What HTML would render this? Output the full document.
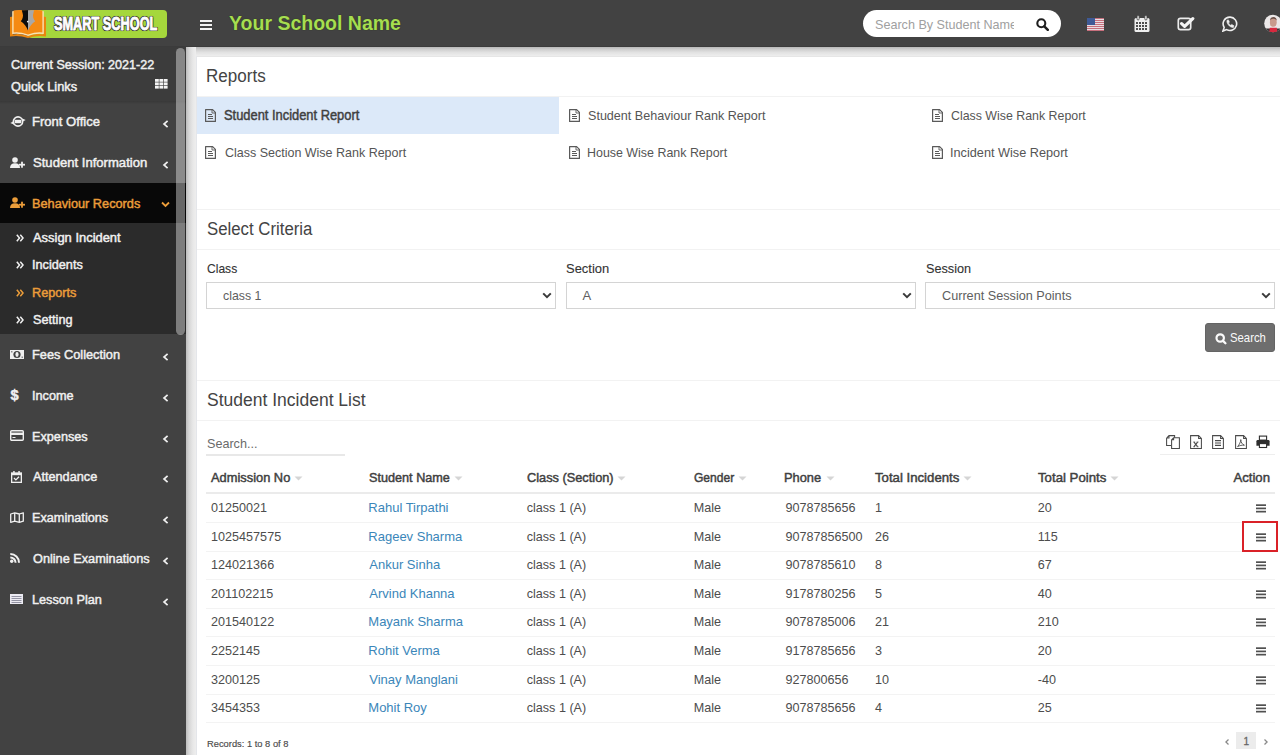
<!DOCTYPE html>
<html><head><meta charset="utf-8">
<style>
*{box-sizing:border-box;margin:0;padding:0}
html,body{width:1280px;height:755px;overflow:hidden;background:#efefef;font-family:"Liberation Sans",sans-serif;position:relative}
.a{position:absolute;display:block}
.t{position:absolute;white-space:nowrap;line-height:1}
</style></head><body>
<div class="a" style="left:0px;top:0px;width:1280px;height:755px;background:#efefef;"></div>
<div class="a" style="left:186px;top:47px;width:1094px;height:10px;background:linear-gradient(180deg,#b8b8b8 0%,#cfcfcf 25%,#e2e2e2 55%,#eeeeee 90%);"></div>
<div class="a" style="left:186px;top:47px;width:10px;height:708px;background:linear-gradient(90deg,#bdbdbd 0%,#d6d6d6 30%,#e8e8e8 70%,#eeeeee 100%);"></div>
<div class="a" style="left:196px;top:56px;width:1084px;height:1px;background:#e6e6e6;"></div>
<div class="a" style="left:196px;top:56px;width:1px;height:699px;background:#e4e6ea;"></div>
<div class="a" style="left:197px;top:57px;width:1083px;height:698px;background:#fff;"></div>
<div class="a" style="left:0px;top:0px;width:1280px;height:47px;background:#424242;"></div>
<div class="a" style="left:0px;top:46px;width:1280px;height:1px;background:#3b3b3b;"></div>
<div class="a" style="left:28px;top:10px;width:139px;height:28px;background:#a5d73c;border-radius:4px"></div>
<div class="t" style="left:53.50px;top:16.40px;font-size:17.6px;color:#fff;font-weight:bold;transform:scaleX(0.7240);transform-origin:0 0;-webkit-text-stroke:0.9px #fff;text-shadow:1px 0 0 #333,-1px 0 0 #333,0 1px 0 #333,0 -1px 0 #333,1px 1px 0 #333,-1px -1px 0 #333,1px -1px 0 #333,-1px 1px 0 #333,0 0 2px #222;">SMART SCHOOL</div>
<svg class="a" style="left:9px;top:9px;" width="40" height="30" viewBox="0 0 40 30"><path d="M1 8 L4 7.5 L4 25.5 Q11 24 19 27 Q27 24 34 25.5 L34 7.5 L37 8 L37 27.5 Q28 26 19 29 Q10 26 1 27.5 Z" fill="#e9850f"/><path d="M3.2 2.2 Q10 0.6 19 2.2 L19.3 27 Q11 23.8 3.2 25 Z" fill="#fbe2b4"/><path d="M34.8 2.2 Q28 0.6 19 2.2 L18.7 27 Q27 23.8 34.8 25 Z" fill="#fbe2b4"/><path d="M4.6 1.6 Q11 0.4 19 2 L19 25.6 Q11 22.6 4.6 23.4 Z" fill="#f58a12"/><path d="M33.4 1.6 Q27 0.4 19 2 L19 25.6 Q27 22.6 33.4 23.4 Z" fill="#f58a12"/><path d="M12.8 1.2 L19 1.2 L19 21.5 C17.5 17.5 15 14.5 11.8 12.3 C13.8 10 14.6 6.5 13.6 4.2 Z" fill="#0d0d0d"/><path d="M19 1.2 L25 1.2 L24.4 4.2 C23.4 6.5 24.2 10 26.2 12.3 C23 14.5 20.5 17.5 19 21.5 Z" fill="#a8a8a8"/><circle cx="18.8" cy="12.6" r="0.9" fill="#eee"/></svg>
<div class="a" style="left:200px;top:20px;width:12px;height:2px;background:#f2f2f2;"></div>
<div class="a" style="left:200px;top:24px;width:12px;height:2px;background:#f2f2f2;"></div>
<div class="a" style="left:200px;top:28px;width:12px;height:2px;background:#f2f2f2;"></div>
<div class="t" style="left:229.00px;top:13.79px;font-size:19.5px;color:#a6dd52;font-weight:bold;text-shadow:0 0 1px #1f3300;">Your School Name</div>
<div class="a" style="left:863px;top:10px;width:198px;height:27px;background:#fff;border-radius:13.5px"></div>
<div class="a" style="left:870px;top:10px;width:144px;height:27px;overflow:hidden">
<div class="t" style="left:5.00px;top:8.63px;font-size:12.6px;color:#a0a0a0;font-weight:normal;">Search By Student Name</div>
</div>
<svg class="a" style="left:1036px;top:18px;" width="13" height="13" viewBox="0 0 13 13"><circle cx="5.3" cy="5.3" r="4" stroke="#1f1f1f" stroke-width="2.1" fill="none"/><path d="M8.3 8.3 L11.8 11.8" stroke="#1f1f1f" stroke-width="2.5" stroke-linecap="round"/></svg>
<svg class="a" style="left:1087px;top:18px;" width="17" height="13" viewBox="0 0 17 13"><rect x="0" y="0.00" width="17" height="1" fill="#c66f7c"/><rect x="0" y="1.00" width="17" height="1" fill="#e9dde2"/><rect x="0" y="2.00" width="17" height="1" fill="#c66f7c"/><rect x="0" y="3.00" width="17" height="1" fill="#e9dde2"/><rect x="0" y="4.00" width="17" height="1" fill="#c66f7c"/><rect x="0" y="5.00" width="17" height="1" fill="#e9dde2"/><rect x="0" y="6.00" width="17" height="1" fill="#c66f7c"/><rect x="0" y="7.00" width="17" height="1" fill="#e9dde2"/><rect x="0" y="8.00" width="17" height="1" fill="#c66f7c"/><rect x="0" y="9.00" width="17" height="1" fill="#e9dde2"/><rect x="0" y="10.00" width="17" height="1" fill="#c66f7c"/><rect x="0" y="11.00" width="17" height="1" fill="#e9dde2"/><rect x="0" y="12.00" width="17" height="1" fill="#c66f7c"/><rect x="0" y="13.00" width="17" height="1" fill="#e9dde2"/><rect x="0" y="0" width="8" height="7" fill="#3f5a96"/></svg>
<svg class="a" style="left:1134px;top:15px;" width="16" height="17" viewBox="0 0 16 17"><rect x="0.5" y="3" width="15" height="14" rx="1.5" fill="#efefef"/><rect x="3" y="0.5" width="2.2" height="4.5" rx="1.1" fill="#efefef" stroke="#424242" stroke-width="0.8"/><rect x="10.8" y="0.5" width="2.2" height="4.5" rx="1.1" fill="#efefef" stroke="#424242" stroke-width="0.8"/><rect x="2.0" y="7.0" width="2" height="2" fill="#4e4e4e"/><rect x="5.0" y="7.0" width="2" height="2" fill="#4e4e4e"/><rect x="8.0" y="7.0" width="2" height="2" fill="#4e4e4e"/><rect x="11.0" y="7.0" width="2" height="2" fill="#4e4e4e"/><rect x="2.0" y="10.0" width="2" height="2" fill="#4e4e4e"/><rect x="5.0" y="10.0" width="2" height="2" fill="#4e4e4e"/><rect x="8.0" y="10.0" width="2" height="2" fill="#4e4e4e"/><rect x="11.0" y="10.0" width="2" height="2" fill="#4e4e4e"/><rect x="2.0" y="13.0" width="2" height="2" fill="#4e4e4e"/><rect x="5.0" y="13.0" width="2" height="2" fill="#4e4e4e"/><rect x="8.0" y="13.0" width="2" height="2" fill="#4e4e4e"/><rect x="11.0" y="13.0" width="2" height="2" fill="#4e4e4e"/></svg>
<svg class="a" style="left:1177px;top:16px;" width="18" height="15" viewBox="0 0 18 15"><rect x="1.3" y="2.3" width="12.4" height="11.4" rx="2.2" stroke="#ececec" stroke-width="1.7" fill="none"/><path d="M4.6 7.6 L7.6 10.4 L15.8 2.6" stroke="#f4f4f4" stroke-width="3.2" stroke-linecap="round" stroke-linejoin="round" fill="none"/></svg>
<svg class="a" style="left:1222px;top:16px;" width="16" height="16" viewBox="0 0 16 16"><path d="M8.2 1.1 A6.7 6.7 0 1 1 4.6 13.6 L0.9 15.1 L2.2 11.4 A6.7 6.7 0 0 1 8.2 1.1 Z" stroke="#efefef" stroke-width="1.6" fill="none"/><path d="M5 4.3 C4.2 7 7.4 11.6 11.4 11.5 L12 9.8 L9.7 8.4 L8.8 9.3 C7.8 8.9 6.9 8 6.5 7 L7.4 6.1 L6.4 3.9 Z" fill="#efefef" stroke="#efefef" stroke-width="0.6" stroke-linejoin="round"/></svg>
<svg class="a" style="left:1264px;top:14px;" width="16" height="19" viewBox="0 0 16 19"><defs><clipPath id="avc"><circle cx="9" cy="9.5" r="8.8"/></clipPath></defs><g clip-path="url(#avc)"><rect x="0" y="0" width="18" height="19" fill="#ece8e8"/><rect x="0" y="14.5" width="18" height="5" fill="#3a3434"/><ellipse cx="9.3" cy="8.2" rx="3.4" ry="4.6" fill="#c99a8c"/><path d="M5.9 6.5 Q6 3 9.3 3 Q12.6 3 12.7 6.5 Q11.5 4.6 9.3 4.8 Q7 4.6 5.9 6.5 Z" fill="#6a5048"/><path d="M5.2 19 L5.8 13.8 L12.8 13.8 L13.4 19 Z" fill="#d8283e"/></g></svg>
<div class="a" style="left:0px;top:47px;width:186px;height:708px;background:#424242;"></div>
<div class="a" style="left:0px;top:47px;width:186px;height:54px;background:#3c3c3c;"></div>
<div class="a" style="left:0px;top:101px;width:186px;height:3px;background:linear-gradient(180deg,#383838,#424242);"></div>
<div class="t" style="left:10.50px;top:58.72px;font-size:12.5px;color:#f0f0f0;font-weight:normal;transform:scaleX(1.0057);transform-origin:0 0;-webkit-text-stroke:0.45px currentColor;">Current Session: 2021-22</div>
<div class="t" style="left:10.50px;top:81.22px;font-size:12.5px;color:#f0f0f0;font-weight:normal;transform:scaleX(1.0224);transform-origin:0 0;-webkit-text-stroke:0.45px currentColor;">Quick Links</div>
<svg class="a" style="left:155px;top:79px;" width="13" height="10" viewBox="0 0 13 10"><rect x="0.0" y="0.0" width="3.8" height="2.8" fill="#f4f4f4"/><rect x="4.4" y="0.0" width="3.8" height="2.8" fill="#f4f4f4"/><rect x="8.8" y="0.0" width="3.8" height="2.8" fill="#f4f4f4"/><rect x="0.0" y="3.4" width="3.8" height="2.8" fill="#f4f4f4"/><rect x="4.4" y="3.4" width="3.8" height="2.8" fill="#f4f4f4"/><rect x="8.8" y="3.4" width="3.8" height="2.8" fill="#f4f4f4"/><rect x="0.0" y="6.8" width="3.8" height="2.8" fill="#f4f4f4"/><rect x="4.4" y="6.8" width="3.8" height="2.8" fill="#f4f4f4"/><rect x="8.8" y="6.8" width="3.8" height="2.8" fill="#f4f4f4"/></svg>
<div class="t" style="left:31.96px;top:115.72px;font-size:12.5px;color:#f0f0f0;font-weight:normal;transform:scaleX(1.0450);transform-origin:0 0;-webkit-text-stroke:0.45px currentColor;">Front Office</div>
<svg class="a" style="left:162px;top:120px;" width="7" height="8" viewBox="0 0 7 8"><path d="M5.6 0.8 L2 4 L5.6 7.2" stroke="#f0f0f0" stroke-width="1.7" fill="none"/></svg>
<div class="t" style="left:33.00px;top:156.72px;font-size:12.5px;color:#f0f0f0;font-weight:normal;transform:scaleX(1.0473);transform-origin:0 0;-webkit-text-stroke:0.45px currentColor;">Student Information</div>
<svg class="a" style="left:162px;top:161px;" width="7" height="8" viewBox="0 0 7 8"><path d="M5.6 0.8 L2 4 L5.6 7.2" stroke="#f0f0f0" stroke-width="1.7" fill="none"/></svg>
<svg class="a" style="left:10px;top:116px;" width="16" height="11" viewBox="0 0 16 11"><circle cx="8" cy="5.5" r="4.6" stroke="#f0f0f0" stroke-width="1.7" fill="none"/><rect x="4.8" y="3.8" width="6.4" height="3.4" fill="#f0f0f0"/><path d="M0.3 7 L3.8 5.2 L3.8 8.6 Z M15.7 4 L12.2 5.8 L12.2 2.4 Z" fill="#f0f0f0"/></svg>
<svg class="a" style="left:10px;top:157px;" width="15" height="11" viewBox="0 0 15 11"><circle cx="5" cy="3" r="2.8" fill="#f0f0f0"/><path d="M0 11 Q0 6.2 5 6.2 Q10 6.2 10 11 Z" fill="#f0f0f0"/><rect x="9" y="6.8" width="6" height="1.8" fill="#f0f0f0"/><rect x="11.1" y="4.7" width="1.8" height="6" fill="#f0f0f0"/></svg>
<div class="a" style="left:0px;top:183px;width:186px;height:40px;background:#080808;"></div>
<svg class="a" style="left:10px;top:197px;" width="15" height="11" viewBox="0 0 15 11"><circle cx="5" cy="3" r="2.8" fill="#eb9d3a"/><path d="M0 11 Q0 6.2 5 6.2 Q10 6.2 10 11 Z" fill="#eb9d3a"/><rect x="9" y="6.8" width="6" height="1.8" fill="#eb9d3a"/><rect x="11.1" y="4.7" width="1.8" height="6" fill="#eb9d3a"/></svg>
<div class="t" style="left:31.98px;top:197.72px;font-size:12.5px;color:#eb9d3a;font-weight:normal;transform:scaleX(1.0185);transform-origin:0 0;-webkit-text-stroke:0.45px currentColor;">Behaviour Records</div>
<svg class="a" style="left:161px;top:201px;" width="9" height="7" viewBox="0 0 9 7"><path d="M1 1.5 L4.5 5 L8 1.5" stroke="#eb9d3a" stroke-width="1.8" fill="none"/></svg>
<div class="a" style="left:0px;top:223px;width:186px;height:111px;background:#2b2b2b;"></div>
<div class="t" style="left:33.00px;top:231.72px;font-size:12.5px;color:#f0f0f0;font-weight:normal;transform:scaleX(1.0340);transform-origin:0 0;-webkit-text-stroke:0.45px currentColor;">Assign Incident</div>
<svg class="a" style="left:16px;top:234px;" width="8" height="8" viewBox="0 0 8 8"><path d="M0.8 0.8 L3.5 4 L0.8 7.2 M4.3 0.8 L7 4 L4.3 7.2" stroke="#f0f0f0" stroke-width="1.5" fill="none"/></svg>
<div class="t" style="left:31.98px;top:258.72px;font-size:12.5px;color:#f0f0f0;font-weight:normal;transform:scaleX(1.0150);transform-origin:0 0;-webkit-text-stroke:0.45px currentColor;">Incidents</div>
<svg class="a" style="left:16px;top:261px;" width="8" height="8" viewBox="0 0 8 8"><path d="M0.8 0.8 L3.5 4 L0.8 7.2 M4.3 0.8 L7 4 L4.3 7.2" stroke="#f0f0f0" stroke-width="1.5" fill="none"/></svg>
<div class="t" style="left:31.98px;top:286.72px;font-size:12.5px;color:#eb9d3a;font-weight:normal;transform:scaleX(1.0150);transform-origin:0 0;-webkit-text-stroke:0.45px currentColor;">Reports</div>
<svg class="a" style="left:16px;top:289px;" width="8" height="8" viewBox="0 0 8 8"><path d="M0.8 0.8 L3.5 4 L0.8 7.2 M4.3 0.8 L7 4 L4.3 7.2" stroke="#eb9d3a" stroke-width="1.5" fill="none"/></svg>
<div class="t" style="left:33.00px;top:313.72px;font-size:12.5px;color:#f0f0f0;font-weight:normal;transform:scaleX(1.0150);transform-origin:0 0;-webkit-text-stroke:0.45px currentColor;">Setting</div>
<svg class="a" style="left:16px;top:316px;" width="8" height="8" viewBox="0 0 8 8"><path d="M0.8 0.8 L3.5 4 L0.8 7.2 M4.3 0.8 L7 4 L4.3 7.2" stroke="#f0f0f0" stroke-width="1.5" fill="none"/></svg>
<div class="t" style="left:31.98px;top:348.72px;font-size:12.5px;color:#f0f0f0;font-weight:normal;transform:scaleX(1.0223);transform-origin:0 0;-webkit-text-stroke:0.45px currentColor;">Fees Collection</div>
<svg class="a" style="left:162px;top:353px;" width="7" height="8" viewBox="0 0 7 8"><path d="M5.6 0.8 L2 4 L5.6 7.2" stroke="#f0f0f0" stroke-width="1.7" fill="none"/></svg>
<div class="t" style="left:31.98px;top:389.72px;font-size:12.5px;color:#f0f0f0;font-weight:normal;transform:scaleX(1.0150);transform-origin:0 0;-webkit-text-stroke:0.45px currentColor;">Income</div>
<svg class="a" style="left:162px;top:394px;" width="7" height="8" viewBox="0 0 7 8"><path d="M5.6 0.8 L2 4 L5.6 7.2" stroke="#f0f0f0" stroke-width="1.7" fill="none"/></svg>
<div class="t" style="left:31.98px;top:430.72px;font-size:12.5px;color:#f0f0f0;font-weight:normal;transform:scaleX(1.0150);transform-origin:0 0;-webkit-text-stroke:0.45px currentColor;">Expenses</div>
<svg class="a" style="left:162px;top:435px;" width="7" height="8" viewBox="0 0 7 8"><path d="M5.6 0.8 L2 4 L5.6 7.2" stroke="#f0f0f0" stroke-width="1.7" fill="none"/></svg>
<div class="t" style="left:33.00px;top:470.72px;font-size:12.5px;color:#f0f0f0;font-weight:normal;transform:scaleX(1.0150);transform-origin:0 0;-webkit-text-stroke:0.45px currentColor;">Attendance</div>
<svg class="a" style="left:162px;top:475px;" width="7" height="8" viewBox="0 0 7 8"><path d="M5.6 0.8 L2 4 L5.6 7.2" stroke="#f0f0f0" stroke-width="1.7" fill="none"/></svg>
<div class="t" style="left:31.98px;top:511.72px;font-size:12.5px;color:#f0f0f0;font-weight:normal;transform:scaleX(1.0150);transform-origin:0 0;-webkit-text-stroke:0.45px currentColor;">Examinations</div>
<svg class="a" style="left:162px;top:516px;" width="7" height="8" viewBox="0 0 7 8"><path d="M5.6 0.8 L2 4 L5.6 7.2" stroke="#f0f0f0" stroke-width="1.7" fill="none"/></svg>
<div class="t" style="left:33.00px;top:552.72px;font-size:12.5px;color:#f0f0f0;font-weight:normal;transform:scaleX(1.0167);transform-origin:0 0;-webkit-text-stroke:0.45px currentColor;">Online Examinations</div>
<svg class="a" style="left:162px;top:557px;" width="7" height="8" viewBox="0 0 7 8"><path d="M5.6 0.8 L2 4 L5.6 7.2" stroke="#f0f0f0" stroke-width="1.7" fill="none"/></svg>
<div class="t" style="left:31.98px;top:593.72px;font-size:12.5px;color:#f0f0f0;font-weight:normal;transform:scaleX(1.0150);transform-origin:0 0;-webkit-text-stroke:0.45px currentColor;">Lesson Plan</div>
<svg class="a" style="left:162px;top:598px;" width="7" height="8" viewBox="0 0 7 8"><path d="M5.6 0.8 L2 4 L5.6 7.2" stroke="#f0f0f0" stroke-width="1.7" fill="none"/></svg>
<svg class="a" style="left:10px;top:350px;" width="14" height="9" viewBox="0 0 14 9"><rect x="0" y="0" width="14" height="9" fill="#f0f0f0"/><ellipse cx="7" cy="4.5" rx="3.6" ry="3.6" fill="#424242"/><ellipse cx="7" cy="4.5" rx="1.6" ry="2.4" fill="#f0f0f0"/><rect x="1.2" y="1.2" width="1.2" height="1.2" fill="#555"/><rect x="11.6" y="6.6" width="1.2" height="1.2" fill="#555"/></svg>
<div class="t" style="left:10.50px;top:388.02px;font-size:14.5px;color:#f0f0f0;font-weight:bold;-webkit-text-stroke:0.5px currentColor;">$</div>
<svg class="a" style="left:10px;top:430px;" width="14" height="11" viewBox="0 0 14 11"><rect x="0.7" y="0.7" width="12.6" height="9.6" rx="1" stroke="#f0f0f0" stroke-width="1.4" fill="none"/><rect x="0.7" y="2.6" width="12.6" height="2.4" fill="#f0f0f0"/><rect x="2.5" y="7" width="3" height="1" fill="#f0f0f0"/></svg>
<svg class="a" style="left:11px;top:471px;" width="11" height="12" viewBox="0 0 11 12"><rect x="0.65" y="2" width="9.7" height="9.35" stroke="#f0f0f0" stroke-width="1.3" fill="none"/><rect x="0.65" y="2" width="9.7" height="2.2" fill="#f0f0f0"/><rect x="2.2" y="0" width="1.5" height="3" fill="#f0f0f0"/><rect x="7.3" y="0" width="1.5" height="3" fill="#f0f0f0"/><path d="M3 7 L4.9 8.9 L8 5.8" stroke="#f0f0f0" stroke-width="1.3" fill="none"/></svg>
<svg class="a" style="left:10px;top:512px;" width="14" height="11" viewBox="0 0 14 11"><path d="M0.7 2 L4.7 0.8 L9.3 2 L13.3 0.8 L13.3 9.2 L9.3 10.3 L4.7 9.2 L0.7 10.3 Z M4.7 0.8 L4.7 9.2 M9.3 2 L9.3 10.3" stroke="#f0f0f0" stroke-width="1.3" fill="none" stroke-linejoin="round"/></svg>
<svg class="a" style="left:10px;top:553px;" width="11" height="10" viewBox="0 0 11 10"><circle cx="1.7" cy="8.3" r="1.7" fill="#f0f0f0"/><path d="M0.3 4.4 A5.3 5.3 0 0 1 5.6 9.7 M0.3 1 A8.7 8.7 0 0 1 9 9.7" stroke="#f0f0f0" stroke-width="2" fill="none"/></svg>
<svg class="a" style="left:10px;top:594px;" width="13" height="10" viewBox="0 0 13 10"><rect x="0" y="0" width="13" height="10" fill="#ecebf2"/><rect x="1.5" y="2.0" width="10" height="0.9" fill="#8a8a9a"/><rect x="1.5" y="4.0" width="10" height="0.9" fill="#8a8a9a"/><rect x="1.5" y="6.0" width="10" height="0.9" fill="#8a8a9a"/><rect x="1.5" y="8.0" width="10" height="0.9" fill="#8a8a9a"/></svg>
<div class="a" style="left:176px;top:48px;width:9px;height:287px;background:rgba(255,255,255,0.39);border-radius:4.5px"></div>
<div class="t" style="left:205.65px;top:67.06px;font-size:18px;color:#444;font-weight:normal;transform:scaleX(0.9464);transform-origin:0 0;">Reports</div>
<div class="a" style="left:197px;top:96px;width:1083px;height:1px;background:#f2f2f2;"></div>
<div class="a" style="left:197px;top:97px;width:362px;height:37px;background:#dce9f9;"></div>
<svg class="a" style="left:205px;top:109px;" width="11" height="13" viewBox="0 0 11 13"><path d="M0.6 0.6 H7.6 L10.4 3.4 V12.4 H0.6 Z" stroke="#5a5a5a" stroke-width="1.2" fill="none" stroke-linejoin="round"/><path d="M7 0.6 V4 H10.4" stroke="#5a5a5a" stroke-width="0.9" fill="none"/><path d="M3 5.5 H7 M3 7.5 H8 M3 9.5 H8" stroke="#5a5a5a" stroke-width="1"/></svg>
<div class="t" style="left:224.40px;top:108.45px;font-size:14px;color:#404040;font-weight:normal;transform:scaleX(0.9198);transform-origin:0 0;-webkit-text-stroke:0.45px currentColor;">Student Incident Report</div>
<svg class="a" style="left:569px;top:109px;" width="11" height="13" viewBox="0 0 11 13"><path d="M0.6 0.6 H7.6 L10.4 3.4 V12.4 H0.6 Z" stroke="#5a5a5a" stroke-width="1.2" fill="none" stroke-linejoin="round"/><path d="M7 0.6 V4 H10.4" stroke="#5a5a5a" stroke-width="0.9" fill="none"/><path d="M3 5.5 H7 M3 7.5 H8 M3 9.5 H8" stroke="#5a5a5a" stroke-width="1"/></svg>
<div class="t" style="left:588.00px;top:109.29px;font-size:13px;color:#555;font-weight:normal;transform:scaleX(0.9671);transform-origin:0 0;">Student Behaviour Rank Report</div>
<svg class="a" style="left:932px;top:109px;" width="11" height="13" viewBox="0 0 11 13"><path d="M0.6 0.6 H7.6 L10.4 3.4 V12.4 H0.6 Z" stroke="#5a5a5a" stroke-width="1.2" fill="none" stroke-linejoin="round"/><path d="M7 0.6 V4 H10.4" stroke="#5a5a5a" stroke-width="0.9" fill="none"/><path d="M3 5.5 H7 M3 7.5 H8 M3 9.5 H8" stroke="#5a5a5a" stroke-width="1"/></svg>
<div class="t" style="left:951.10px;top:109.29px;font-size:13px;color:#555;font-weight:normal;transform:scaleX(0.9515);transform-origin:0 0;">Class Wise Rank Report</div>
<svg class="a" style="left:205px;top:146px;" width="11" height="13" viewBox="0 0 11 13"><path d="M0.6 0.6 H7.6 L10.4 3.4 V12.4 H0.6 Z" stroke="#5a5a5a" stroke-width="1.2" fill="none" stroke-linejoin="round"/><path d="M7 0.6 V4 H10.4" stroke="#5a5a5a" stroke-width="0.9" fill="none"/><path d="M3 5.5 H7 M3 7.5 H8 M3 9.5 H8" stroke="#5a5a5a" stroke-width="1"/></svg>
<div class="t" style="left:224.70px;top:146.29px;font-size:13px;color:#555;font-weight:normal;transform:scaleX(0.9605);transform-origin:0 0;">Class Section Wise Rank Report</div>
<svg class="a" style="left:569px;top:146px;" width="11" height="13" viewBox="0 0 11 13"><path d="M0.6 0.6 H7.6 L10.4 3.4 V12.4 H0.6 Z" stroke="#5a5a5a" stroke-width="1.2" fill="none" stroke-linejoin="round"/><path d="M7 0.6 V4 H10.4" stroke="#5a5a5a" stroke-width="0.9" fill="none"/><path d="M3 5.5 H7 M3 7.5 H8 M3 9.5 H8" stroke="#5a5a5a" stroke-width="1"/></svg>
<div class="t" style="left:587.34px;top:146.29px;font-size:13px;color:#555;font-weight:normal;transform:scaleX(0.9558);transform-origin:0 0;">House Wise Rank Report</div>
<svg class="a" style="left:932px;top:146px;" width="11" height="13" viewBox="0 0 11 13"><path d="M0.6 0.6 H7.6 L10.4 3.4 V12.4 H0.6 Z" stroke="#5a5a5a" stroke-width="1.2" fill="none" stroke-linejoin="round"/><path d="M7 0.6 V4 H10.4" stroke="#5a5a5a" stroke-width="0.9" fill="none"/><path d="M3 5.5 H7 M3 7.5 H8 M3 9.5 H8" stroke="#5a5a5a" stroke-width="1"/></svg>
<div class="t" style="left:950.12px;top:146.29px;font-size:13px;color:#555;font-weight:normal;transform:scaleX(0.9771);transform-origin:0 0;">Incident Wise Report</div>
<div class="a" style="left:197px;top:209px;width:1083px;height:1px;background:#f2f2f2;"></div>
<div class="t" style="left:207.10px;top:220.06px;font-size:18px;color:#444;font-weight:normal;transform:scaleX(0.9322);transform-origin:0 0;">Select Criteria</div>
<div class="a" style="left:197px;top:249px;width:1083px;height:1px;background:#f2f2f2;"></div>
<div class="t" style="left:206.60px;top:261.87px;font-size:13.5px;color:#333;font-weight:normal;transform:scaleX(0.8939);transform-origin:0 0;-webkit-text-stroke:0.12px currentColor;">Class</div>
<div class="t" style="left:566.20px;top:261.87px;font-size:13.5px;color:#333;font-weight:normal;transform:scaleX(0.9591);transform-origin:0 0;-webkit-text-stroke:0.12px currentColor;">Section</div>
<div class="t" style="left:925.80px;top:261.87px;font-size:13.5px;color:#333;font-weight:normal;transform:scaleX(0.9386);transform-origin:0 0;-webkit-text-stroke:0.12px currentColor;">Session</div>
<div class="a" style="left:206px;top:282px;width:350px;height:27px;background:#fff;border:1px solid #d4d4d4;box-sizing:border-box"></div>
<div class="t" style="left:222.50px;top:289.29px;font-size:13px;color:#5e5e5e;font-weight:normal;transform:scaleX(0.9495);transform-origin:0 0;">class 1</div>
<svg class="a" style="left:542px;top:292px;" width="10" height="8" viewBox="0 0 10 8"><path d="M1.2 1.4 L5 5.2 L8.8 1.4" stroke="#3a3a3a" stroke-width="2" fill="none"/></svg>
<div class="a" style="left:566px;top:282px;width:350px;height:27px;background:#fff;border:1px solid #d4d4d4;box-sizing:border-box"></div>
<div class="t" style="left:582.50px;top:289.29px;font-size:13px;color:#5e5e5e;font-weight:normal;">A</div>
<svg class="a" style="left:902px;top:292px;" width="10" height="8" viewBox="0 0 10 8"><path d="M1.2 1.4 L5 5.2 L8.8 1.4" stroke="#3a3a3a" stroke-width="2" fill="none"/></svg>
<div class="a" style="left:925px;top:282px;width:350px;height:27px;background:#fff;border:1px solid #d4d4d4;box-sizing:border-box"></div>
<div class="t" style="left:941.50px;top:289.29px;font-size:13px;color:#5e5e5e;font-weight:normal;transform:scaleX(0.9741);transform-origin:0 0;">Current Session Points</div>
<svg class="a" style="left:1261px;top:292px;" width="10" height="8" viewBox="0 0 10 8"><path d="M1.2 1.4 L5 5.2 L8.8 1.4" stroke="#3a3a3a" stroke-width="2" fill="none"/></svg>
<div class="a" style="left:1205px;top:323px;width:70px;height:29px;background:#6e6e6e;border-radius:3px;border:1px solid #646464;box-sizing:border-box"></div>
<svg class="a" style="left:1215px;top:333px;" width="12" height="12" viewBox="0 0 12 12"><circle cx="5.2" cy="5" r="3.7" stroke="#fafafa" stroke-width="2.2" fill="none"/><path d="M7.8 7.6 L10.4 10.2" stroke="#fafafa" stroke-width="2.3" stroke-linecap="round"/></svg>
<div class="t" style="left:1229.50px;top:331.97px;font-size:12.2px;color:#fafafa;font-weight:normal;transform:scaleX(0.9303);transform-origin:0 0;">Search</div>
<div class="a" style="left:197px;top:380px;width:1083px;height:1px;background:#f2f2f2;"></div>
<div class="t" style="left:206.70px;top:391.06px;font-size:18px;color:#444;font-weight:normal;transform:scaleX(0.9724);transform-origin:0 0;">Student Incident List</div>
<div class="a" style="left:197px;top:420px;width:1083px;height:1px;background:#f2f2f2;"></div>
<div class="t" style="left:206.70px;top:437.29px;font-size:13px;color:#6a6a6a;font-weight:normal;transform:scaleX(0.9686);transform-origin:0 0;">Search...</div>
<div class="a" style="left:206px;top:454px;width:139px;height:2px;background:#e8e8e8;"></div>
<div class="a" style="left:1160px;top:454px;width:115px;height:1px;background:#eeeeee;"></div>
<svg class="a" style="left:1165px;top:434px;" width="16" height="16" viewBox="0 0 16 16"><path d="M1.6 4 L4 1.6 L9.6 1.6 L9.6 4.3 M1.6 4 L1.6 11.4 L6 11.4 M1.6 4 L4 4 L4 1.6" stroke="#4a4a4a" stroke-width="1.05" fill="none"/><path d="M6.6 5.8 L8.6 3.8 L14.4 3.8 L14.4 14.4 L6.6 14.4 Z M6.6 5.8 L8.6 5.8 L8.6 3.8" stroke="#4a4a4a" stroke-width="1.05" fill="#fff"/></svg>
<svg class="a" style="left:1190px;top:435px;" width="12" height="14" viewBox="0 0 12 14"><path d="M0.6 0.6 L8.6 0.6 L11.4 3.4 L11.4 13.4 L0.6 13.4 Z M8.6 0.6 L8.6 3.4 L11.4 3.4" stroke="#4a4a4a" stroke-width="1.05" fill="none"/><path d="M4 7.2 L7.6 11.6 M7.6 7.2 L4 11.6" stroke="#4a4a4a" stroke-width="1.1"/><path d="M3.2 7 H5.2 M6.6 7 H8.6 M3.2 11.8 H5.2 M6.6 11.8 H8.6" stroke="#4a4a4a" stroke-width="0.7"/></svg>
<svg class="a" style="left:1212px;top:435px;" width="12" height="14" viewBox="0 0 12 14"><path d="M0.6 0.6 L8.6 0.6 L11.4 3.4 L11.4 13.4 L0.6 13.4 Z M8.6 0.6 L8.6 3.4 L11.4 3.4" stroke="#4a4a4a" stroke-width="1.05" fill="none"/><path d="M3 5.6 H9 M3 8 H9 M3 10.4 H9" stroke="#4a4a4a" stroke-width="1.1"/></svg>
<svg class="a" style="left:1235px;top:435px;" width="12" height="14" viewBox="0 0 12 14"><path d="M0.6 0.6 L8.6 0.6 L11.4 3.4 L11.4 13.4 L0.6 13.4 Z M8.6 0.6 L8.6 3.4 L11.4 3.4" stroke="#4a4a4a" stroke-width="1.05" fill="none"/><path d="M2.6 11.6 C4.4 9.6 5.8 6.6 5.8 4.6 C5.8 7.2 7.2 9.4 9.4 10.2 C7 9.9 4.6 10.6 2.6 11.6" stroke="#4a4a4a" stroke-width="0.9" fill="none"/></svg>
<svg class="a" style="left:1256px;top:435px;" width="14" height="14" viewBox="0 0 14 14"><rect x="3.4" y="1.1" width="7.2" height="4" fill="none" stroke="#2e2e2e" stroke-width="1.1"/><path d="M0.4 6.3 Q0.4 5 1.7 5 L12.3 5 Q13.6 5 13.6 6.3 L13.6 10.8 L0.4 10.8 Z" fill="#2e2e2e"/><rect x="3.4" y="8.6" width="7.2" height="3.9" fill="#fff" stroke="#2e2e2e" stroke-width="1.1"/></svg>
<div class="t" style="left:211.10px;top:471.63px;font-size:12.6px;color:#404040;font-weight:normal;transform:scaleX(1.0208);transform-origin:0 0;-webkit-text-stroke:0.45px currentColor;">Admission No</div>
<svg class="a" style="left:294px;top:476px;" width="9" height="5" viewBox="0 0 9 5"><path d="M0.5 0.5 L8.5 0.5 L4.5 4.5 Z" fill="#d5d5d5"/></svg>
<div class="t" style="left:369.30px;top:471.63px;font-size:12.6px;color:#404040;font-weight:normal;transform:scaleX(1.0049);transform-origin:0 0;-webkit-text-stroke:0.45px currentColor;">Student Name</div>
<svg class="a" style="left:454px;top:476px;" width="9" height="5" viewBox="0 0 9 5"><path d="M0.5 0.5 L8.5 0.5 L4.5 4.5 Z" fill="#d5d5d5"/></svg>
<div class="t" style="left:526.70px;top:471.63px;font-size:12.6px;color:#404040;font-weight:normal;transform:scaleX(1.0142);transform-origin:0 0;-webkit-text-stroke:0.45px currentColor;">Class (Section)</div>
<svg class="a" style="left:617px;top:476px;" width="9" height="5" viewBox="0 0 9 5"><path d="M0.5 0.5 L8.5 0.5 L4.5 4.5 Z" fill="#d5d5d5"/></svg>
<div class="t" style="left:694.00px;top:471.63px;font-size:12.6px;color:#404040;font-weight:normal;transform:scaleX(0.9567);transform-origin:0 0;-webkit-text-stroke:0.45px currentColor;">Gender</div>
<svg class="a" style="left:738px;top:476px;" width="9" height="5" viewBox="0 0 9 5"><path d="M0.5 0.5 L8.5 0.5 L4.5 4.5 Z" fill="#d5d5d5"/></svg>
<div class="t" style="left:784.48px;top:471.63px;font-size:12.6px;color:#404040;font-weight:normal;transform:scaleX(1.0194);transform-origin:0 0;-webkit-text-stroke:0.45px currentColor;">Phone</div>
<svg class="a" style="left:826px;top:476px;" width="9" height="5" viewBox="0 0 9 5"><path d="M0.5 0.5 L8.5 0.5 L4.5 4.5 Z" fill="#d5d5d5"/></svg>
<div class="t" style="left:875.00px;top:471.63px;font-size:12.6px;color:#404040;font-weight:normal;transform:scaleX(1.0473);transform-origin:0 0;-webkit-text-stroke:0.45px currentColor;">Total Incidents</div>
<svg class="a" style="left:963px;top:476px;" width="9" height="5" viewBox="0 0 9 5"><path d="M0.5 0.5 L8.5 0.5 L4.5 4.5 Z" fill="#d5d5d5"/></svg>
<div class="t" style="left:1037.70px;top:471.63px;font-size:12.6px;color:#404040;font-weight:normal;transform:scaleX(1.0493);transform-origin:0 0;-webkit-text-stroke:0.45px currentColor;">Total Points</div>
<svg class="a" style="left:1110px;top:476px;" width="9" height="5" viewBox="0 0 9 5"><path d="M0.5 0.5 L8.5 0.5 L4.5 4.5 Z" fill="#d5d5d5"/></svg>
<div class="t" style="right:10.20px;top:471.63px;font-size:12.6px;color:#404040;font-weight:normal;transform:scaleX(1.0458);transform-origin:100% 0;-webkit-text-stroke:0.45px currentColor;">Action</div>
<div class="a" style="left:206px;top:492px;width:1069px;height:2px;background:#ebebeb;"></div>
<div class="t" style="left:211.10px;top:501.63px;font-size:12.6px;color:#4d4d4d;font-weight:normal;">01250021</div>
<div class="t" style="left:368.30px;top:501.29px;font-size:13px;color:#3b86b9;font-weight:normal;">Rahul Tirpathi</div>
<div class="t" style="left:526.70px;top:501.63px;font-size:12.6px;color:#4d4d4d;font-weight:normal;">class 1 (A)</div>
<div class="t" style="left:693.80px;top:501.63px;font-size:12.6px;color:#4d4d4d;font-weight:normal;">Male</div>
<div class="t" style="left:785.50px;top:501.63px;font-size:12.6px;color:#4d4d4d;font-weight:normal;">9078785656</div>
<div class="t" style="left:875.00px;top:501.63px;font-size:12.6px;color:#4d4d4d;font-weight:normal;">1</div>
<div class="t" style="left:1037.70px;top:501.63px;font-size:12.6px;color:#4d4d4d;font-weight:normal;">20</div>
<svg class="a" style="left:1256px;top:503px;" width="10" height="10" viewBox="0 0 10 10"><rect x="0" y="1.3" width="10" height="1.7" fill="#505050"/><rect x="0" y="4.55" width="10" height="1.7" fill="#505050"/><rect x="0" y="7.8" width="10" height="1.7" fill="#505050"/></svg>
<div class="a" style="left:206px;top:522px;width:1069px;height:1px;background:#f3f3f3;"></div>
<div class="t" style="left:211.10px;top:530.63px;font-size:12.6px;color:#4d4d4d;font-weight:normal;">1025457575</div>
<div class="t" style="left:368.30px;top:530.29px;font-size:13px;color:#3b86b9;font-weight:normal;">Rageev Sharma</div>
<div class="t" style="left:526.70px;top:530.63px;font-size:12.6px;color:#4d4d4d;font-weight:normal;">class 1 (A)</div>
<div class="t" style="left:693.80px;top:530.63px;font-size:12.6px;color:#4d4d4d;font-weight:normal;">Male</div>
<div class="t" style="left:785.50px;top:530.63px;font-size:12.6px;color:#4d4d4d;font-weight:normal;">90787856500</div>
<div class="t" style="left:875.00px;top:530.63px;font-size:12.6px;color:#4d4d4d;font-weight:normal;">26</div>
<div class="t" style="left:1037.70px;top:530.63px;font-size:12.6px;color:#4d4d4d;font-weight:normal;">115</div>
<svg class="a" style="left:1256px;top:532px;" width="10" height="10" viewBox="0 0 10 10"><rect x="0" y="1.3" width="10" height="1.7" fill="#505050"/><rect x="0" y="4.55" width="10" height="1.7" fill="#505050"/><rect x="0" y="7.8" width="10" height="1.7" fill="#505050"/></svg>
<div class="a" style="left:206px;top:551px;width:1069px;height:1px;background:#f3f3f3;"></div>
<div class="t" style="left:211.10px;top:558.63px;font-size:12.6px;color:#4d4d4d;font-weight:normal;">124021366</div>
<div class="t" style="left:369.30px;top:558.29px;font-size:13px;color:#3b86b9;font-weight:normal;">Ankur Sinha</div>
<div class="t" style="left:526.70px;top:558.63px;font-size:12.6px;color:#4d4d4d;font-weight:normal;">class 1 (A)</div>
<div class="t" style="left:693.80px;top:558.63px;font-size:12.6px;color:#4d4d4d;font-weight:normal;">Male</div>
<div class="t" style="left:785.50px;top:558.63px;font-size:12.6px;color:#4d4d4d;font-weight:normal;">9078785610</div>
<div class="t" style="left:875.00px;top:558.63px;font-size:12.6px;color:#4d4d4d;font-weight:normal;">8</div>
<div class="t" style="left:1037.70px;top:558.63px;font-size:12.6px;color:#4d4d4d;font-weight:normal;">67</div>
<svg class="a" style="left:1256px;top:560px;" width="10" height="10" viewBox="0 0 10 10"><rect x="0" y="1.3" width="10" height="1.7" fill="#505050"/><rect x="0" y="4.55" width="10" height="1.7" fill="#505050"/><rect x="0" y="7.8" width="10" height="1.7" fill="#505050"/></svg>
<div class="a" style="left:206px;top:579px;width:1069px;height:1px;background:#f3f3f3;"></div>
<div class="t" style="left:211.10px;top:587.63px;font-size:12.6px;color:#4d4d4d;font-weight:normal;">201102215</div>
<div class="t" style="left:369.30px;top:587.29px;font-size:13px;color:#3b86b9;font-weight:normal;">Arvind Khanna</div>
<div class="t" style="left:526.70px;top:587.63px;font-size:12.6px;color:#4d4d4d;font-weight:normal;">class 1 (A)</div>
<div class="t" style="left:693.80px;top:587.63px;font-size:12.6px;color:#4d4d4d;font-weight:normal;">Male</div>
<div class="t" style="left:785.50px;top:587.63px;font-size:12.6px;color:#4d4d4d;font-weight:normal;">9178780256</div>
<div class="t" style="left:875.00px;top:587.63px;font-size:12.6px;color:#4d4d4d;font-weight:normal;">5</div>
<div class="t" style="left:1037.70px;top:587.63px;font-size:12.6px;color:#4d4d4d;font-weight:normal;">40</div>
<svg class="a" style="left:1256px;top:589px;" width="10" height="10" viewBox="0 0 10 10"><rect x="0" y="1.3" width="10" height="1.7" fill="#505050"/><rect x="0" y="4.55" width="10" height="1.7" fill="#505050"/><rect x="0" y="7.8" width="10" height="1.7" fill="#505050"/></svg>
<div class="a" style="left:206px;top:608px;width:1069px;height:1px;background:#f3f3f3;"></div>
<div class="t" style="left:211.10px;top:615.63px;font-size:12.6px;color:#4d4d4d;font-weight:normal;">201540122</div>
<div class="t" style="left:368.30px;top:615.29px;font-size:13px;color:#3b86b9;font-weight:normal;">Mayank Sharma</div>
<div class="t" style="left:526.70px;top:615.63px;font-size:12.6px;color:#4d4d4d;font-weight:normal;">class 1 (A)</div>
<div class="t" style="left:693.80px;top:615.63px;font-size:12.6px;color:#4d4d4d;font-weight:normal;">Male</div>
<div class="t" style="left:785.50px;top:615.63px;font-size:12.6px;color:#4d4d4d;font-weight:normal;">9078785006</div>
<div class="t" style="left:875.00px;top:615.63px;font-size:12.6px;color:#4d4d4d;font-weight:normal;">21</div>
<div class="t" style="left:1037.70px;top:615.63px;font-size:12.6px;color:#4d4d4d;font-weight:normal;">210</div>
<svg class="a" style="left:1256px;top:617px;" width="10" height="10" viewBox="0 0 10 10"><rect x="0" y="1.3" width="10" height="1.7" fill="#505050"/><rect x="0" y="4.55" width="10" height="1.7" fill="#505050"/><rect x="0" y="7.8" width="10" height="1.7" fill="#505050"/></svg>
<div class="a" style="left:206px;top:636px;width:1069px;height:1px;background:#f3f3f3;"></div>
<div class="t" style="left:211.10px;top:644.63px;font-size:12.6px;color:#4d4d4d;font-weight:normal;">2252145</div>
<div class="t" style="left:368.30px;top:644.29px;font-size:13px;color:#3b86b9;font-weight:normal;">Rohit Verma</div>
<div class="t" style="left:526.70px;top:644.63px;font-size:12.6px;color:#4d4d4d;font-weight:normal;">class 1 (A)</div>
<div class="t" style="left:693.80px;top:644.63px;font-size:12.6px;color:#4d4d4d;font-weight:normal;">Male</div>
<div class="t" style="left:785.50px;top:644.63px;font-size:12.6px;color:#4d4d4d;font-weight:normal;">9178785656</div>
<div class="t" style="left:875.00px;top:644.63px;font-size:12.6px;color:#4d4d4d;font-weight:normal;">3</div>
<div class="t" style="left:1037.70px;top:644.63px;font-size:12.6px;color:#4d4d4d;font-weight:normal;">20</div>
<svg class="a" style="left:1256px;top:646px;" width="10" height="10" viewBox="0 0 10 10"><rect x="0" y="1.3" width="10" height="1.7" fill="#505050"/><rect x="0" y="4.55" width="10" height="1.7" fill="#505050"/><rect x="0" y="7.8" width="10" height="1.7" fill="#505050"/></svg>
<div class="a" style="left:206px;top:665px;width:1069px;height:1px;background:#f3f3f3;"></div>
<div class="t" style="left:211.10px;top:673.63px;font-size:12.6px;color:#4d4d4d;font-weight:normal;">3200125</div>
<div class="t" style="left:369.30px;top:673.29px;font-size:13px;color:#3b86b9;font-weight:normal;">Vinay Manglani</div>
<div class="t" style="left:526.70px;top:673.63px;font-size:12.6px;color:#4d4d4d;font-weight:normal;">class 1 (A)</div>
<div class="t" style="left:693.80px;top:673.63px;font-size:12.6px;color:#4d4d4d;font-weight:normal;">Male</div>
<div class="t" style="left:785.50px;top:673.63px;font-size:12.6px;color:#4d4d4d;font-weight:normal;">927800656</div>
<div class="t" style="left:875.00px;top:673.63px;font-size:12.6px;color:#4d4d4d;font-weight:normal;">10</div>
<div class="t" style="left:1037.70px;top:673.63px;font-size:12.6px;color:#4d4d4d;font-weight:normal;">-40</div>
<svg class="a" style="left:1256px;top:675px;" width="10" height="10" viewBox="0 0 10 10"><rect x="0" y="1.3" width="10" height="1.7" fill="#505050"/><rect x="0" y="4.55" width="10" height="1.7" fill="#505050"/><rect x="0" y="7.8" width="10" height="1.7" fill="#505050"/></svg>
<div class="a" style="left:206px;top:694px;width:1069px;height:1px;background:#f3f3f3;"></div>
<div class="t" style="left:211.10px;top:701.63px;font-size:12.6px;color:#4d4d4d;font-weight:normal;">3454353</div>
<div class="t" style="left:368.30px;top:701.29px;font-size:13px;color:#3b86b9;font-weight:normal;">Mohit Roy</div>
<div class="t" style="left:526.70px;top:701.63px;font-size:12.6px;color:#4d4d4d;font-weight:normal;">class 1 (A)</div>
<div class="t" style="left:693.80px;top:701.63px;font-size:12.6px;color:#4d4d4d;font-weight:normal;">Male</div>
<div class="t" style="left:785.50px;top:701.63px;font-size:12.6px;color:#4d4d4d;font-weight:normal;">9078785656</div>
<div class="t" style="left:875.00px;top:701.63px;font-size:12.6px;color:#4d4d4d;font-weight:normal;">4</div>
<div class="t" style="left:1037.70px;top:701.63px;font-size:12.6px;color:#4d4d4d;font-weight:normal;">25</div>
<svg class="a" style="left:1256px;top:703px;" width="10" height="10" viewBox="0 0 10 10"><rect x="0" y="1.3" width="10" height="1.7" fill="#505050"/><rect x="0" y="4.55" width="10" height="1.7" fill="#505050"/><rect x="0" y="7.8" width="10" height="1.7" fill="#505050"/></svg>
<div class="a" style="left:206px;top:722px;width:1069px;height:1px;background:#f3f3f3;"></div>
<div class="a" style="left:1242px;top:521px;width:36px;height:31px;background:transparent;border:2px solid #da2128;box-sizing:border-box"></div>
<div class="t" style="left:206.90px;top:738.60px;font-size:9.8px;color:#4a4a4a;font-weight:normal;transform:scaleX(0.9529);transform-origin:0 0;-webkit-text-stroke:0.15px currentColor;">Records: 1 to 8 of 8</div>
<div class="a" style="left:1236px;top:732px;width:20px;height:17px;background:#ececec;"></div>
<div class="t" style="left:1243.50px;top:736.83px;font-size:10px;color:#666;font-weight:normal;-webkit-text-stroke:0.3px currentColor;">1</div>
<svg class="a" style="left:1225px;top:739px;" width="4" height="6" viewBox="0 0 4 6"><path d="M3.5 0.5 L0.9 3 L3.5 5.5" stroke="#888" stroke-width="1.3" fill="none"/></svg>
<svg class="a" style="left:1264px;top:739px;" width="4" height="6" viewBox="0 0 4 6"><path d="M0.5 0.5 L3.1 3 L0.5 5.5" stroke="#888" stroke-width="1.3" fill="none"/></svg>
</body></html>
